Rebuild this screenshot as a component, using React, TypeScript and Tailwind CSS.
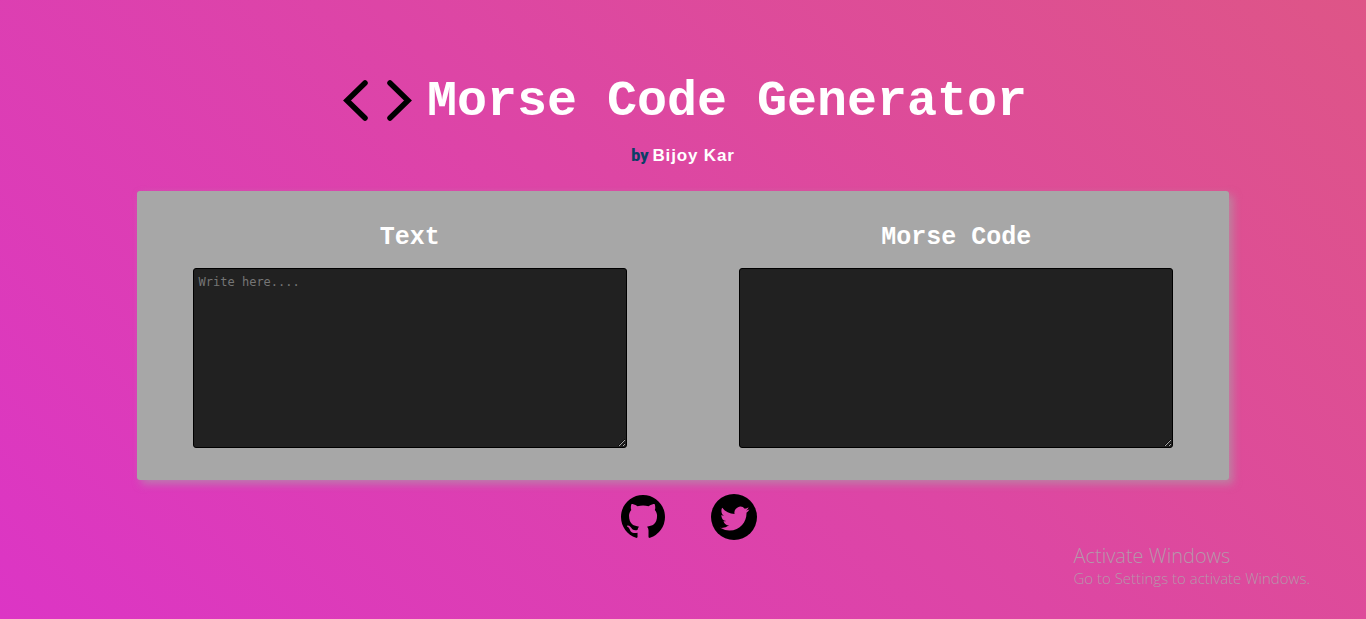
import { useState } from "react";

const MORSE: Record<string, string> = {
  a: ".-", b: "-...", c: "-.-.", d: "-..", e: ".", f: "..-.", g: "--.", h: "....", i: "..",
  j: ".---", k: "-.-", l: ".-..", m: "--", n: "-.", o: "---", p: ".--.", q: "--.-", r: ".-.",
  s: "...", t: "-", u: "..-", v: "...-", w: ".--", x: "-..-", y: "-.--", z: "--..",
  "0": "-----", "1": ".----", "2": "..---", "3": "...--", "4": "....-", "5": ".....",
  "6": "-....", "7": "--...", "8": "---..", "9": "----.", " ": "/",
};

const toMorse = (text: string) =>
  text.toLowerCase().split("").map((c) => MORSE[c] ?? c).join(" ");

const areaClass =
  "block h-[180px] w-full resize rounded-[3px] border border-black bg-[#212121] px-[5px] py-[5px] font-['DejaVu_Sans_Mono',monospace] text-[12px] leading-4 text-white outline-none placeholder:text-[#757575]";
const labelClass =
  "mb-4 block text-center font-['Courier_New','Liberation_Mono',monospace] text-[25px] leading-7 font-bold text-white";

function CodeIcon() {
  return (
    <svg className="h-[42px] w-[70px]" viewBox="0 0 70 42" fill="none" stroke="#000" strokeWidth="5.5" aria-hidden="true">
      <path strokeLinecap="round" d="M22 3 4 20.500 22 38" />
      <path strokeLinecap="round" d="M47 3 65 20.500 47 38" />
    </svg>
  );
}

function GithubIcon() {
  return (
    <svg className="size-11" viewBox="0 0 16 16" aria-hidden="true">
      <path d="M8 0C3.580 0 0 3.580 0 8c0 3.540 2.290 6.530 5.470 7.590.4.070.55-.17.55-.38 0-.19-.010-.82-.010-1.490-2.010.37-2.530-.49-2.690-.94-.090-.23-.48-.94-.82-1.130-.28-.15-.68-.52-.010-.53.63-.010 1.080.58 1.230.82.72 1.210 1.870.87 2.330.66.070-.52.28-.87.51-1.070-1.780-.2-3.640-.89-3.640-3.950 0-.87.31-1.590.82-2.150-.080-.2-.36-1.020.080-2.120 0 0 .67-.21 2.200.82.64-.18 1.320-.27 2-.27s1.360.090 2 .27c1.530-1.040 2.200-.82 2.200-.82.44 1.100.16 1.920.080 2.120.51.56.82 1.270.82 2.150 0 3.070-1.870 3.750-3.650 3.950.29.25.54.73.54 1.480 0 1.070-.010 1.930-.010 2.200 0 .21.15.46.55.38A8.010 8.010 0 0 0 16 8c0-4.420-3.580-8-8-8Z" />
    </svg>
  );
}

function TwitterIcon() {
  return (
    <svg className="size-[46px]" viewBox="0 0 46 46" aria-hidden="true">
      <mask id="bird">
        <rect width="46" height="46" fill="#fff" />
        <path
          transform="translate(9.200 10) scale(1.220)"
          fill="#000"
          d="M23.953 4.570a10 10 0 0 1-2.825.775 4.958 4.958 0 0 0 2.163-2.723c-.951.555-2.005.959-3.127 1.184a4.920 4.920 0 0 0-8.384 4.482C7.690 8.095 4.067 6.130 1.640 3.162a4.822 4.822 0 0 0-.666 2.475c0 1.710.87 3.213 2.188 4.096a4.904 4.904 0 0 1-2.228-.616v.060a4.923 4.923 0 0 0 3.946 4.827 4.996 4.996 0 0 1-2.212.085 4.936 4.936 0 0 0 4.604 3.417 9.867 9.867 0 0 1-6.102 2.105c-.39 0-.779-.023-1.170-.067a13.995 13.995 0 0 0 7.557 2.209c9.053 0 13.998-7.496 13.998-13.985 0-.21 0-.42-.015-.63A9.935 9.935 0 0 0 24 4.590z"
        />
      </mask>
      <circle cx="23" cy="23" r="23" mask="url(#bird)" />
    </svg>
  );
}

export default function App() {
  const [text, setText] = useState("");

  return (
    <div className="relative min-h-screen bg-[linear-gradient(45deg,#dc35c5,#de5587)] pt-[72px]">
      <header className="flex flex-col items-center">
        <div className="flex items-start gap-3.5 pl-1">
          <span className="pt-2"><CodeIcon /></span>
          <h1 className="font-['Courier_New','Liberation_Mono',monospace] text-[50px] leading-[60px] font-bold text-white">
            Morse Code Generator
          </h1>
        </div>
        <p className="mt-3 flex items-center gap-1 leading-6">
          <span className="font-['Impact','Roboto',sans-serif] text-base leading-6 font-black text-[#0c3f66]">by</span>
          <span className="font-['Liberation_Sans',sans-serif] text-[17px] font-bold tracking-wider text-white">Bijoy Kar</span>
        </p>
      </header>

      <main className="mx-auto mt-[23px] grid w-4/5 grid-cols-2 gap-28 rounded-[3px] bg-[#a7a7a7] px-14 pt-[33px] pb-8 shadow-[4px_4px_8px_#a7a7a799]">
        <div>
          <label htmlFor="text" className={labelClass}>Text</label>
          <textarea
            id="text"
            className={areaClass}
            placeholder="Write here...."
            value={text}
            onChange={(e) => setText(e.target.value)}
          />
        </div>
        <div>
          <label htmlFor="morse" className={labelClass}>Morse Code</label>
          <textarea id="morse" className={areaClass} readOnly value={toMorse(text)} />
        </div>
      </main>

      <footer className="mt-3.5 flex items-center justify-center gap-[46px] pl-3">
        <a href="https://github.com" aria-label="GitHub"><GithubIcon /></a>
        <a href="https://twitter.com" aria-label="Twitter"><TwitterIcon /></a>
      </footer>

      <aside className="absolute right-14 bottom-[31px] font-['Open_Sans',sans-serif] text-[#b597aa]">
        <p className="text-[20px] leading-6 font-light">Activate Windows</p>
        <p className="text-[15px] leading-5 font-light">Go to Settings to activate Windows.</p>
      </aside>
    </div>
  );
}
